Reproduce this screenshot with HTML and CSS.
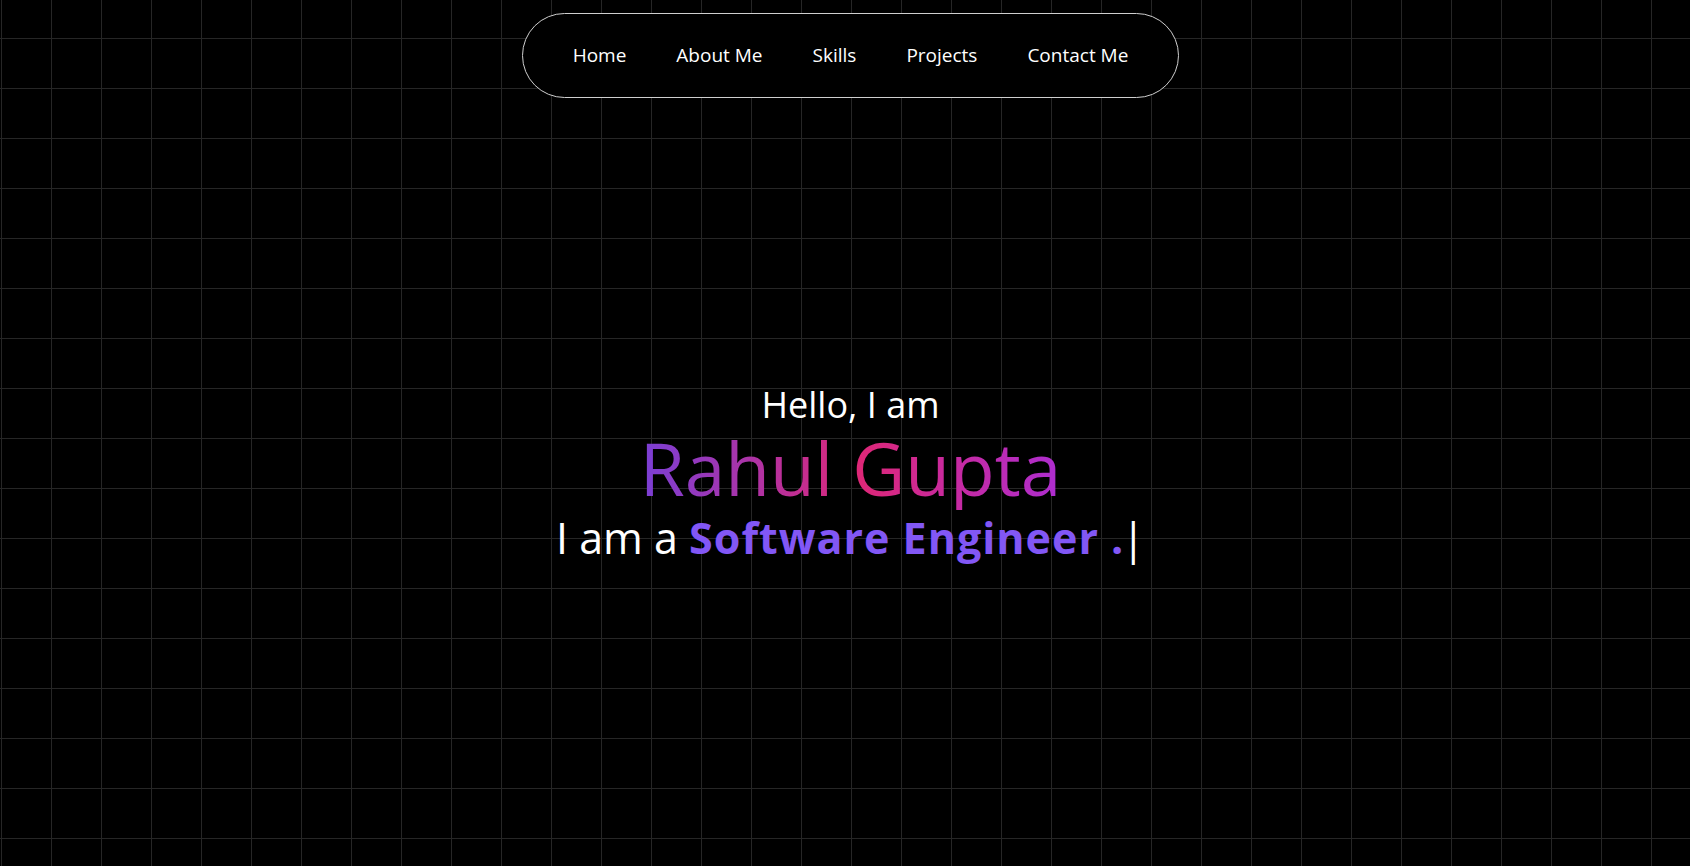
FILE: index.html
```html
<!DOCTYPE html>
<html lang="en">
<head>
<meta charset="utf-8">
<title>Rahul Gupta</title>
<link rel="stylesheet" href="styles.css">
</head>
<body>
<div class="page">
  <header class="header">
    <nav class="nav">
      <a class="nav-link" href="#home">Home</a>
      <a class="nav-link" href="#about">About Me</a>
      <a class="nav-link" href="#skills">Skills</a>
      <a class="nav-link" href="#projects">Projects</a>
      <a class="nav-link" href="#contact">Contact Me</a>
    </nav>
  </header>
  <main class="hero">
    <div class="hello">Hello, I am</div>
    <div class="name">Rahul Gupta</div>
    <div class="role">I am a <span class="role-strong">Software Engineer .</span><span class="cursor">|</span></div>
  </main>
</div>
</body>
</html>
```
FILE: styles.css
```css
html, body {
  margin: 0;
  padding: 0;
  height: 100%;
}
body {
  background-color: #000;
  background-image:
    linear-gradient(to right, #262626 1px, transparent 1px),
    linear-gradient(to bottom, #262626 1px, transparent 1px);
  background-size: 50px 50px;
  background-position: 1px 38px;
  font-family: "Open Sans", "Noto Sans", sans-serif;
  color: #fff;
  overflow: hidden;
}
.page {
  min-height: 866px;
  padding-left: 11px;
  box-sizing: border-box;
}
.header {
  display: flex;
  justify-content: center;
  padding-top: 13px;
}
.nav {
  display: flex;
  align-items: center;
  gap: 50px;
  height: 85px;
  box-sizing: border-box;
  padding: 0 50px;
  border: 1px solid #cfcfcf;
  border-radius: 43px;
  background: #000;
}
.nav-link {
  color: #fff;
  text-decoration: none;
  font-size: 19px;
  line-height: 1;
}
.hero {
  display: flex;
  flex-direction: column;
  align-items: center;
  padding-top: 287px;
}
.hello {
  font-size: 36px;
  line-height: 40px;
}
.name {
  font-size: 73px;
  font-weight: 500;
  line-height: 85px;
  background: linear-gradient(90deg, #7a3fd6 0%, #de2777 52%, #ad2dd0 100%);
  -webkit-background-clip: text;
  background-clip: text;
  color: transparent;
}
.role {
  font-size: 43px;
  line-height: 56px;
}
.role-strong {
  font-weight: 700;
  color: #8257f5;
  letter-spacing: 1px;
}
.cursor {
  color: #fff;
  font-weight: 400;
  margin-left: -3px;
}
```
